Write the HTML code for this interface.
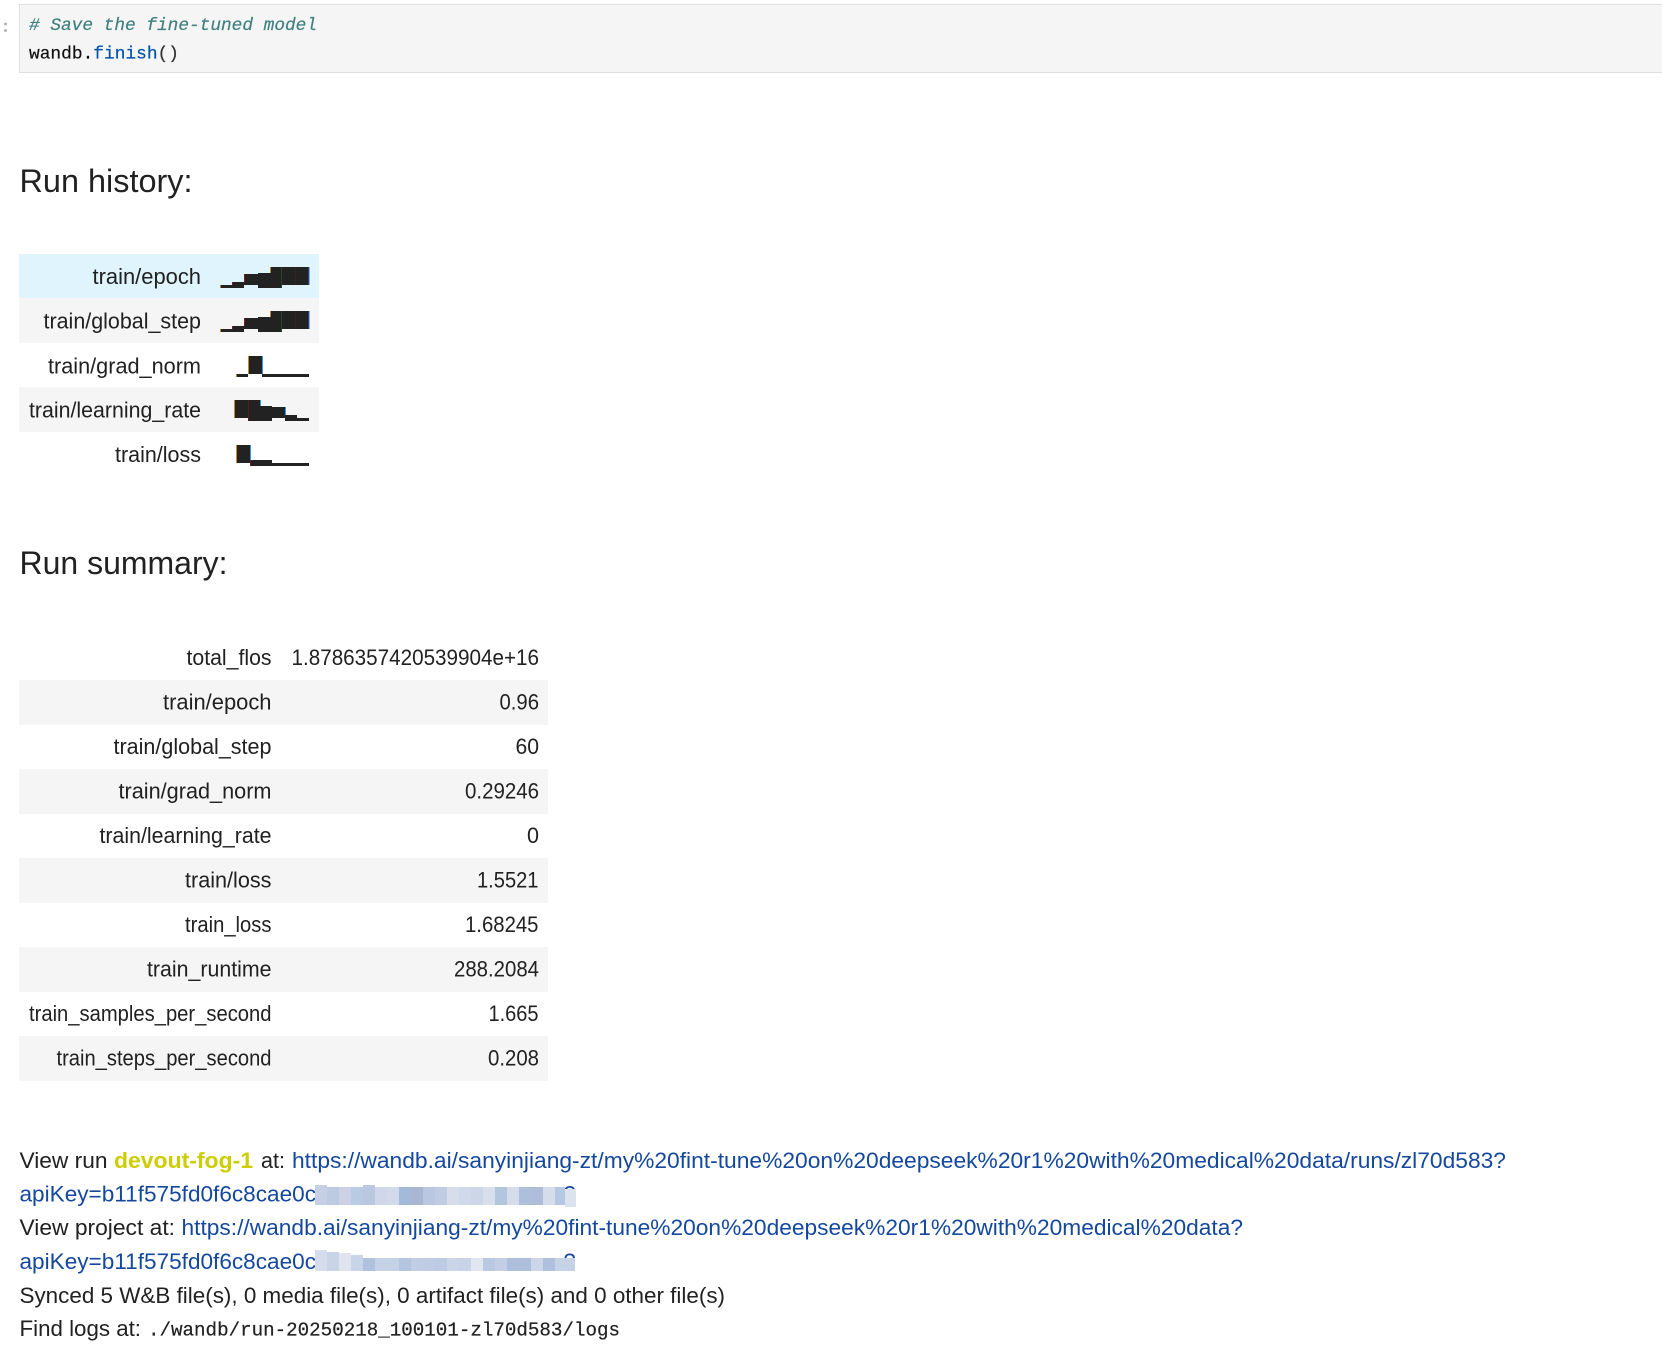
<!DOCTYPE html>
<html lang="en">
<head>
<meta charset="utf-8">
<title>Run summary</title>
<style>
html,body{margin:0;padding:0;background:#fff;width:1662px;height:1347px;overflow:hidden}
svg{display:block}
text{font-family:"Liberation Sans",sans-serif;font-size:22px;fill:#212121;white-space:pre}
.m{font-family:"Liberation Mono",monospace}
.l{fill:#14489f}
.b{fill:#222}
</style>
</head>
<body>
<svg width="1662" height="1347" viewBox="0 0 1662 1347" xmlns="http://www.w3.org/2000/svg">
<!-- prompt -->
<circle cx="5.5" cy="24" r="1.5" fill="#b5b5b5"/><circle cx="5.5" cy="30.5" r="1.5" fill="#b5b5b5"/>
<!-- code cell -->
<rect x="19.5" y="4.5" width="1660" height="68" fill="#f5f5f5" stroke="#e0e0e0"/>
<text class="m" x="29" y="30" style="font-size:17.8px;font-style:italic;fill:#408080" textLength="288" lengthAdjust="spacingAndGlyphs" stroke="#408080" stroke-width="0.2"># Save the fine-tuned model</text>
<text class="m" x="29" y="58.5" style="font-size:17.8px;fill:#111" textLength="150" lengthAdjust="spacingAndGlyphs" stroke="#111" stroke-width="0.2">wandb.<tspan fill="#0055aa" stroke="#0055aa">finish</tspan><tspan fill="#333" stroke="#333">()</tspan></text>

<text x="19.5" y="192" style="font-size:32px" textLength="173" lengthAdjust="spacingAndGlyphs">Run history:</text>

<!-- history table -->
<rect x="19" y="254" width="300" height="44" fill="#e0f4fe"/>
<rect x="19" y="298" width="300" height="45" fill="#f5f5f5"/>
<rect x="19" y="387" width="300" height="45" fill="#f5f5f5"/>
<text x="92.500" y="284" textLength="108.500" lengthAdjust="spacingAndGlyphs">train/epoch</text>
<text x="43.500" y="328.500" textLength="157.500" lengthAdjust="spacingAndGlyphs">train/global_step</text>
<text x="48" y="373.500" textLength="153" lengthAdjust="spacingAndGlyphs">train/grad_norm</text>
<text x="29" y="417.500" textLength="172" lengthAdjust="spacingAndGlyphs">train/learning_rate</text>
<text x="115" y="462" textLength="86" lengthAdjust="spacingAndGlyphs">train/loss</text>

<!-- sparklines -->
<g>
<rect class="b" x="220" y="285" width="12" height="3"/>
<rect class="b" x="232" y="282" width="12" height="6"/>
<rect class="b" x="244" y="274" width="14" height="11"/>
<rect class="b" x="258" y="273" width="12" height="15"/>
<rect class="b" x="270" y="267" width="12" height="21"/>
<rect class="b" x="282" y="267" width="27" height="18"/>
<rect x="220" y="285" width="1" height="3" fill="#b8862e"/>
<rect x="244" y="274" width="1" height="8" fill="#7a1c1c"/>
<rect x="232" y="282" width="1" height="3" fill="#7a1c1c"/>
<rect x="270" y="267" width="1" height="6" fill="#b8862e"/>
<rect x="281" y="267" width="1" height="21" fill="#1f4a22"/>
<rect x="295" y="267" width="1" height="18" fill="#3a1f1f"/>
<rect x="308.500" y="267" width="1" height="18" fill="#2a62c0"/>
</g>
<g transform="translate(0,44)">
<rect class="b" x="220" y="285" width="12" height="3"/>
<rect class="b" x="232" y="282" width="12" height="6"/>
<rect class="b" x="244" y="274" width="14" height="11"/>
<rect class="b" x="258" y="273" width="12" height="15"/>
<rect class="b" x="270" y="267" width="12" height="21"/>
<rect class="b" x="282" y="267" width="27" height="18"/>
<rect x="220" y="285" width="1" height="3" fill="#b8862e"/>
<rect x="244" y="274" width="1" height="8" fill="#7a1c1c"/>
<rect x="232" y="282" width="1" height="3" fill="#7a1c1c"/>
<rect x="270" y="267" width="1" height="6" fill="#b8862e"/>
<rect x="281" y="267" width="1" height="21" fill="#1f4a22"/>
<rect x="295" y="267" width="1" height="18" fill="#3a1f1f"/>
<rect x="308.500" y="267" width="1" height="18" fill="#2a62c0"/>
</g>
<!-- grad_norm -->
<rect class="b" x="236" y="374" width="12" height="3"/>
<rect class="b" x="248" y="356" width="14" height="18"/>
<rect class="b" x="262" y="374" width="47" height="3"/>
<rect x="248" y="356" width="1" height="18" fill="#c98a1e"/>
<rect x="262" y="356" width="1" height="18" fill="#2f9be0"/>
<rect x="236" y="374" width="1" height="3" fill="#b8862e"/>
<!-- learning_rate -->
<rect class="b" x="234" y="400" width="14" height="18"/>
<rect class="b" x="248" y="400" width="12" height="21"/>
<rect class="b" x="260" y="406" width="12" height="15"/>
<rect class="b" x="272" y="407" width="13" height="11"/>
<rect class="b" x="285" y="415" width="12" height="6"/>
<rect class="b" x="297" y="418" width="12" height="3"/>
<rect x="234" y="400" width="1" height="18" fill="#c98a1e"/>
<rect x="248" y="400" width="1" height="21" fill="#5a1a1a"/>
<rect x="260" y="400" width="1" height="6" fill="#2f9be0"/>
<rect x="285" y="407" width="1" height="8" fill="#2f9be0"/>
<!-- loss -->
<rect class="b" x="236" y="445" width="14" height="18"/>
<rect class="b" x="250" y="460" width="22" height="6"/>
<rect class="b" x="272" y="463" width="37" height="3"/>
<rect x="236" y="445" width="1" height="18" fill="#c98a1e"/>
<rect x="250" y="445" width="1" height="15" fill="#2f9be0"/>
<rect x="250" y="460" width="1" height="6" fill="#7a1c1c"/>

<text x="19.500" y="574" style="font-size:32px" textLength="208" lengthAdjust="spacingAndGlyphs">Run summary:</text>

<!-- summary table -->
<rect x="19" y="680" width="529" height="45" fill="#f5f5f5"/>
<rect x="19" y="769" width="529" height="45" fill="#f5f5f5"/>
<rect x="19" y="858" width="529" height="45" fill="#f5f5f5"/>
<rect x="19" y="947" width="529" height="45" fill="#f5f5f5"/>
<rect x="19" y="1036" width="529" height="45" fill="#f5f5f5"/>

<text x="186.500" y="665" textLength="85" lengthAdjust="spacingAndGlyphs">total_flos</text>
<text x="163" y="709.500" textLength="108.500" lengthAdjust="spacingAndGlyphs">train/epoch</text>
<text x="113.500" y="754" textLength="158" lengthAdjust="spacingAndGlyphs">train/global_step</text>
<text x="118.500" y="798.500" textLength="153" lengthAdjust="spacingAndGlyphs">train/grad_norm</text>
<text x="99.500" y="843" textLength="172" lengthAdjust="spacingAndGlyphs">train/learning_rate</text>
<text x="185" y="887.500" textLength="86.500" lengthAdjust="spacingAndGlyphs">train/loss</text>
<text x="185" y="932" textLength="86.500" lengthAdjust="spacingAndGlyphs">train_loss</text>
<text x="147" y="976.500" textLength="124.500" lengthAdjust="spacingAndGlyphs">train_runtime</text>
<text x="29" y="1021" textLength="242.500" lengthAdjust="spacingAndGlyphs">train_samples_per_second</text>
<text x="56.500" y="1065.500" textLength="215" lengthAdjust="spacingAndGlyphs">train_steps_per_second</text>

<text x="291.500" y="665" textLength="247.500" lengthAdjust="spacingAndGlyphs">1.8786357420539904e+16</text>
<text x="499.500" y="709.500" textLength="39.500" lengthAdjust="spacingAndGlyphs">0.96</text>
<text x="515.500" y="754" textLength="23.500" lengthAdjust="spacingAndGlyphs">60</text>
<text x="465" y="798.500" textLength="74" lengthAdjust="spacingAndGlyphs">0.29246</text>
<text x="527" y="843" textLength="12" lengthAdjust="spacingAndGlyphs">0</text>
<text x="477" y="887.500" textLength="61.500" lengthAdjust="spacingAndGlyphs">1.5521</text>
<text x="465" y="932" textLength="73.500" lengthAdjust="spacingAndGlyphs">1.68245</text>
<text x="454" y="976.500" textLength="85" lengthAdjust="spacingAndGlyphs">288.2084</text>
<text x="488.500" y="1021" textLength="50" lengthAdjust="spacingAndGlyphs">1.665</text>
<text x="488" y="1065.500" textLength="51" lengthAdjust="spacingAndGlyphs">0.208</text>

<!-- footer -->
<text x="19.500" y="1168" textLength="88" lengthAdjust="spacingAndGlyphs">View run</text>
<text x="114" y="1168" style="font-weight:bold;fill:#cdcd00" textLength="139" lengthAdjust="spacingAndGlyphs">devout-fog-1</text>
<text x="261" y="1168" textLength="24" lengthAdjust="spacingAndGlyphs">at:</text>
<text class="l" x="292" y="1168" textLength="1214" lengthAdjust="spacingAndGlyphs">https://wandb.ai/sanyinjiang-zt/my%20fint-tune%20on%20deepseek%20r1%20with%20medical%20data/runs/zl70d583?</text>

<text class="l" x="19.500" y="1201.500" textLength="296.500" lengthAdjust="spacingAndGlyphs">apiKey=b11f575fd0f6c8cae0c</text>
<text class="l" x="563.500" y="1201.500">?</text>
<g>
<rect x="315" y="1185" width="12" height="20" fill="#c5d0e5"/>
<rect x="327" y="1187" width="12" height="18" fill="#bccae2"/>
<rect x="339" y="1187" width="12" height="18" fill="#cdd1e4"/>
<rect x="351" y="1187" width="12" height="18" fill="#b9cae3"/>
<rect x="363" y="1185" width="12" height="20" fill="#bac7e0"/>
<rect x="375" y="1187" width="12" height="18" fill="#cfd7e8"/>
<rect x="387" y="1187" width="12" height="18" fill="#d1d9ea"/>
<rect x="399" y="1187" width="12" height="18" fill="#a3bad9"/>
<rect x="411" y="1187" width="12" height="18" fill="#a9b7d5"/>
<rect x="423" y="1187" width="12" height="18" fill="#bac7e0"/>
<rect x="435" y="1187" width="12" height="18" fill="#bfcce3"/>
<rect x="447" y="1187" width="12" height="18" fill="#d7ddeb"/>
<rect x="459" y="1187" width="12" height="18" fill="#d0d9e9"/>
<rect x="471" y="1187" width="12" height="18" fill="#cdd6e7"/>
<rect x="483" y="1187" width="12" height="18" fill="#d8deeb"/>
<rect x="495" y="1187" width="12" height="18" fill="#b3c6e0"/>
<rect x="507" y="1187" width="12" height="18" fill="#d5ddeb"/>
<rect x="519" y="1187" width="12" height="18" fill="#adbfdc"/>
<rect x="531" y="1187" width="12" height="18" fill="#b0bdda"/>
<rect x="543" y="1187" width="12" height="18" fill="#d5ddeb"/>
<rect x="555" y="1187" width="10" height="18" fill="#b6c7e1"/>
<rect x="565" y="1189" width="11" height="18" fill="#dbe3ee"/>
</g>

<text x="19.500" y="1235" textLength="155.500" lengthAdjust="spacingAndGlyphs">View project at:</text>
<text class="l" x="181.500" y="1235" textLength="1061.500" lengthAdjust="spacingAndGlyphs">https://wandb.ai/sanyinjiang-zt/my%20fint-tune%20on%20deepseek%20r1%20with%20medical%20data?</text>

<text class="l" x="19.500" y="1269" textLength="296.500" lengthAdjust="spacingAndGlyphs">apiKey=b11f575fd0f6c8cae0c</text>
<text class="l" x="563.500" y="1269">?</text>
<g>
<rect x="315" y="1250" width="12" height="21" fill="#d5dcec"/>
<rect x="327" y="1252" width="12" height="19" fill="#c9d4e7"/>
<rect x="339" y="1253" width="12" height="18" fill="#dfe4ef"/>
<rect x="351" y="1255" width="12" height="16" fill="#c8d5e8"/>
<rect x="363" y="1258" width="12" height="13" fill="#afc1dd"/>
<rect x="375" y="1258" width="12" height="13" fill="#c4d1e6"/>
<rect x="387" y="1258" width="12" height="13" fill="#c4d2e6"/>
<rect x="399" y="1258" width="12" height="13" fill="#b3c5df"/>
<rect x="411" y="1258" width="12" height="13" fill="#c1cde4"/>
<rect x="423" y="1258" width="12" height="13" fill="#c0cce3"/>
<rect x="435" y="1258" width="12" height="13" fill="#bdcae3"/>
<rect x="447" y="1258" width="12" height="13" fill="#cbd5e8"/>
<rect x="459" y="1258" width="12" height="13" fill="#c8d3e7"/>
<rect x="471" y="1258" width="12" height="13" fill="#e1e7f1"/>
<rect x="483" y="1258" width="12" height="13" fill="#bac8e2"/>
<rect x="495" y="1258" width="12" height="13" fill="#c4cfe6"/>
<rect x="507" y="1258" width="12" height="13" fill="#aebfdc"/>
<rect x="519" y="1258" width="12" height="13" fill="#aebfdc"/>
<rect x="531" y="1258" width="12" height="13" fill="#ccd6e8"/>
<rect x="543" y="1258" width="12" height="13" fill="#aec0dc"/>
<rect x="555" y="1258" width="20" height="13" fill="#c6d3e7"/>
</g>

<text x="19.500" y="1303" textLength="705.500" lengthAdjust="spacingAndGlyphs">Synced 5 W&amp;B file(s), 0 media file(s), 0 artifact file(s) and 0 other file(s)</text>
<text x="19.500" y="1336" textLength="121.500" lengthAdjust="spacingAndGlyphs">Find logs at:</text>
<text class="m" x="148" y="1335.500" style="font-size:19.200px" textLength="472" lengthAdjust="spacingAndGlyphs" stroke="#212121" stroke-width="0.2">./wandb/run-20250218_100101-zl70d583/logs</text>
</svg>
</body>
</html>
